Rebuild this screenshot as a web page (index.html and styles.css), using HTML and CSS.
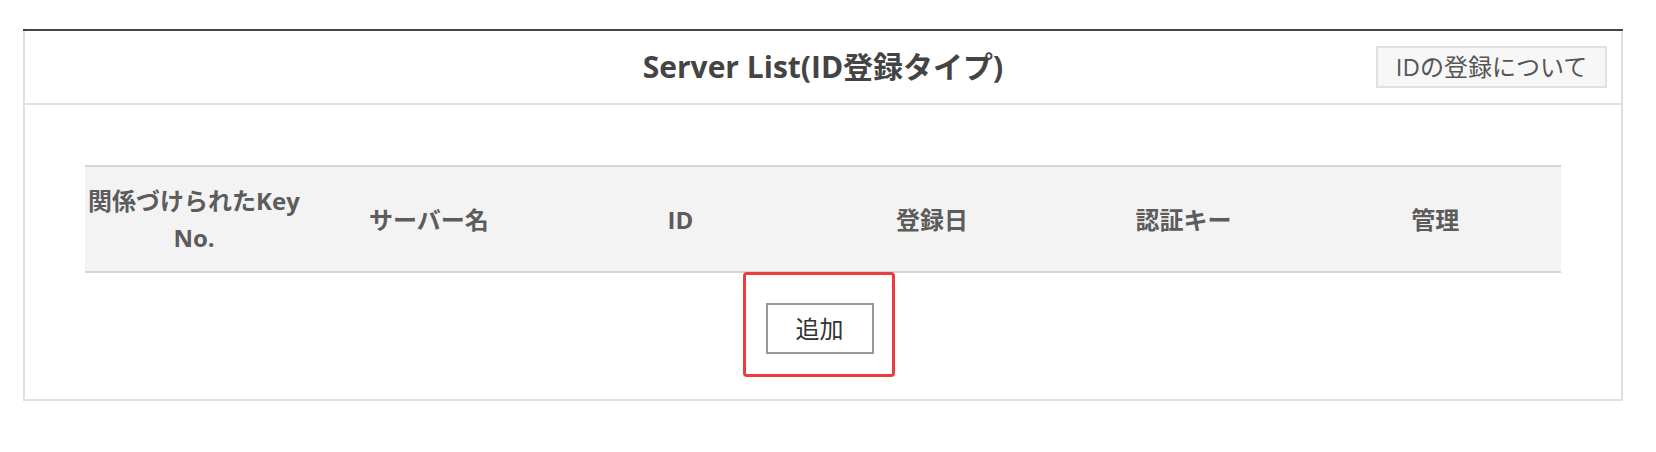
FILE: index.html
```html
<!DOCTYPE html>
<html lang="ja">
<head>
<meta charset="utf-8">
<title>Server List</title>
<link rel="stylesheet" href="styles.css">
</head>
<body>
<div class="page">
  <div class="panel">
    <div class="panel-box">
      <div class="panel-head">
        <div class="spacer"></div>
        <h1 class="title">Server List(ID登録タイプ)</h1>
        <button class="help-btn" type="button">IDの登録について</button>
      </div>
      <div class="panel-body">
        <table class="list">
          <thead>
            <tr>
              <th class="col-key">関係づけられたKey No.</th>
              <th>サーバー名</th>
              <th>ID</th>
              <th>登録日</th>
              <th>認証キー</th>
              <th>管理</th>
            </tr>
          </thead>
        </table>
        <div class="add-row">
          <div class="add-wrap">
            <button class="add-btn" type="button">追加</button>
            <span class="highlight"></span>
          </div>
        </div>
      </div>
    </div>
  </div>
</div>
</body>
</html>
```

FILE: styles.css
```css
html, body {
  margin: 0;
  padding: 0;
  background: #ffffff;
}

body {
  font-family: "Open Sans", "Noto Sans CJK JP", sans-serif;
  color: #444444;
}

.page {
  padding: 29px 0 0 23px;
}

.panel {
  width: 1600px;
  border-top: 2px solid #444444;
}

.panel-box {
  border: 2px solid #e0e0e0;
  border-top: 0;
}

.panel-head {
  display: grid;
  grid-template-columns: 1fr auto 1fr;
  align-items: center;
  height: 72px;
  border-bottom: 2px solid #e0e0e0;
}

.title {
  margin: 0;
  font-size: 30px;
  font-weight: 700;
  color: #444444;
  line-height: 1.2;
}

.help-btn {
  justify-self: end;
  margin-right: 14px;
  height: 42px;
  width: 231px;
  padding: 0;
  border: 2px solid #e0e0e0;
  background: #f7f7f7;
  color: #555555;
  font-family: "Open Sans", "Noto Sans CJK JP", sans-serif;
  font-size: 24px;
  font-weight: 400;
  line-height: 1;
}

.panel-body {
  padding: 60px 60px 45px 60px;
}

.list {
  width: 100%;
  border-collapse: collapse;
  table-layout: fixed;
}

.list th {
  background: #f3f3f3;
  border-top: 2px solid #d6d6d6;
  border-bottom: 2px solid #d6d6d6;
  padding: 15px 0;
  height: 104px;
  box-sizing: border-box;
  font-size: 24px;
  font-weight: 700;
  color: #5c5c5c;
  line-height: 37px;
  text-align: center;
  vertical-align: middle;
}

.list th.col-key {
  width: 218px;
}

.add-row {
  display: flex;
  justify-content: center;
  padding-top: 30px;
}

.add-wrap {
  position: relative;
  margin-right: 7px;
}

.add-btn {
  display: block;
  width: 108px;
  height: 51px;
  padding: 0;
  border: 2px solid #9a9a9a;
  background: #ffffff;
  color: #333333;
  font-family: "Open Sans", "Noto Sans CJK JP", sans-serif;
  font-size: 24px;
  font-weight: 400;
  line-height: 1;
}

.highlight {
  position: absolute;
  top: -31px;
  left: -23px;
  width: 152px;
  height: 105px;
  box-sizing: border-box;
  border: 3px solid #ea3d3d;
  border-radius: 4px;
  pointer-events: none;
}
```
